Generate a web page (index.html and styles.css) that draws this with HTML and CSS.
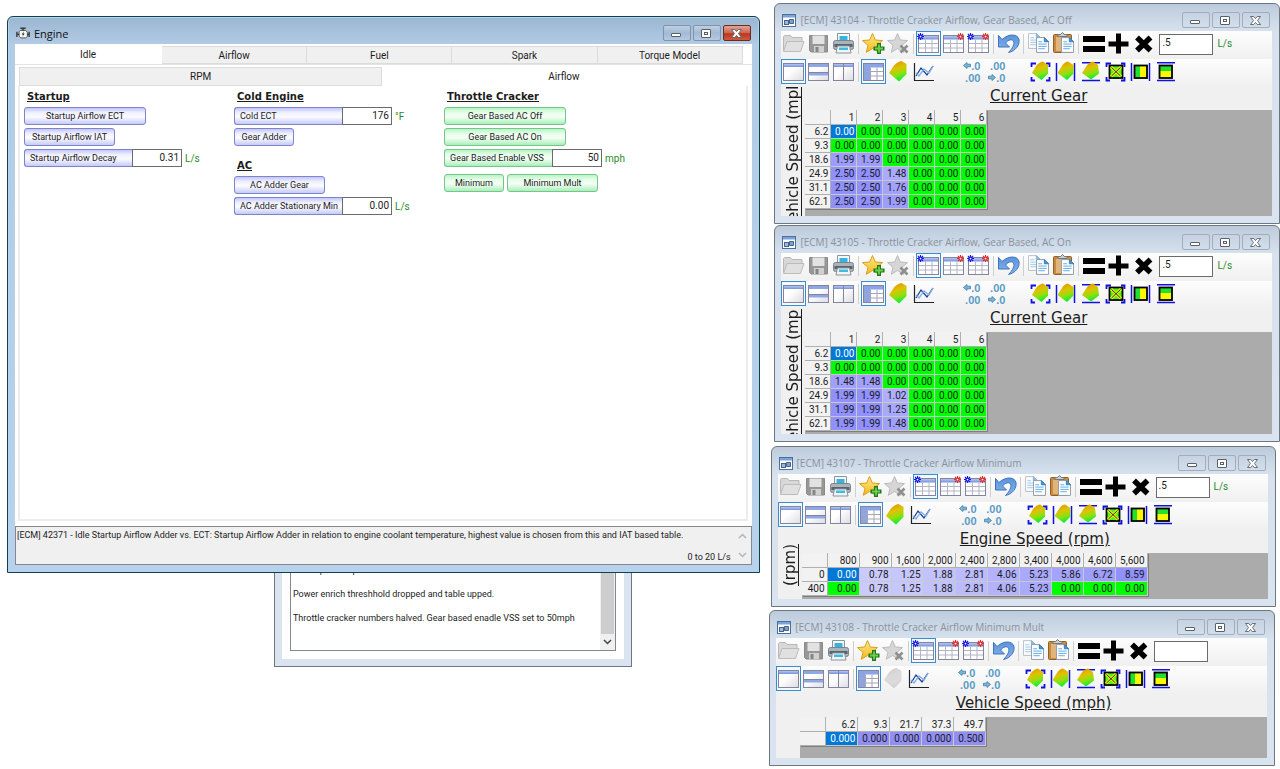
FILE: index.html
```html
<!DOCTYPE html>
<html lang="en">
<head>
    <meta charset="UTF-8">
    <meta name="viewport" content="width=device-width, initial-scale=1.0">
    <title>Engine</title>
    <link rel="stylesheet" href="styles.css">
</head>
<body>

<!-- Icon sprite -->
<svg class="sprite" aria-hidden="true">
    <defs>
        <linearGradient id="surfFill" x1="0.2" y1="0" x2="0.5" y2="1">
            <stop offset="0" stop-color="#e89000"/>
            <stop offset="0.4" stop-color="#dcc400"/>
            <stop offset="0.7" stop-color="#8ee010"/>
            <stop offset="1" stop-color="#00f030"/>
        </linearGradient>
        <linearGradient id="starFill" x1="0" y1="0" x2="0" y2="1">
            <stop offset="0" stop-color="#ffe88a"/>
            <stop offset="1" stop-color="#f5b81c"/>
        </linearGradient>
        <linearGradient id="barFill" x1="0" y1="0" x2="0" y2="1">
            <stop offset="0" stop-color="#b4c6f4"/>
            <stop offset="1" stop-color="#7391dc"/>
        </linearGradient>
        <linearGradient id="paneFill" x1="0" y1="0" x2="1" y2="1">
            <stop offset="0.4" stop-color="#fff"/>
            <stop offset="1" stop-color="#dcdce4"/>
        </linearGradient>
        <linearGradient id="undoFill" x1="0" y1="0" x2="0" y2="1">
            <stop offset="0" stop-color="#5a93dc"/>
            <stop offset="1" stop-color="#86b4ea"/>
        </linearGradient>
    </defs>
    <symbol id="i-engine" viewBox="0 0 16 14">
        <path d="M5 3.5h6l2 2v5L11 12H5.5L3.5 10V5z" fill="#f4f6f8" stroke="#444"/>
        <path d="M5 1h6M8 1v2.5M1 5v6M1 8h2.5M15 5v6M13 8h2" fill="none" stroke="#333" stroke-width="1.5"/>
        <path d="M9 4.5 6.5 8h1.7l-.9 2.8L9.9 7H8.2z" fill="#222"/>
    </symbol>
    <symbol id="i-form" viewBox="0 0 14 13">
        <rect x="0.5" y="0.5" width="13" height="12" fill="#fff" stroke="#4d6f9c"/>
        <rect x="1" y="1" width="12" height="2.5" fill="#7aa4d8"/>
        <rect x="2.5" y="6.5" width="4" height="4" fill="#9cb8dc" stroke="#47648c"/>
        <path d="M7.5 5.5h4v4h-4z" fill="#7da0cf" stroke="#47648c"/>
    </symbol>
    <symbol id="i-open" viewBox="0 0 25 25">
        <path d="M2.5 19.5V5.5l1-1h6l1.5 2h10v4" fill="#d8d8d8" stroke="#b8b8b8"/>
        <path d="M2.5 20.5 6 10.5h17l-3.5 10z" fill="#e0e0e0" stroke="#bcbcbc"/>
    </symbol>
    <symbol id="i-save" viewBox="0 0 25 25">
        <path d="M3.5 4.5h18v16.5H5l-1.5-1.5z" fill="#979797" stroke="#8a8a8a"/>
        <rect x="6.5" y="4.5" width="12" height="8.5" fill="#e2e2e2"/>
        <rect x="8" y="15" width="10" height="6" fill="#d0d0d0"/>
        <rect x="9.5" y="16" width="3" height="5" fill="#858585"/>
    </symbol>
    <symbol id="i-print" viewBox="0 0 25 25">
        <path d="M6.5 2.5h12v8h-12z" fill="#f4fafc" stroke="#8c9399"/>
        <path d="M8.5 5h8v6h-8z" fill="#36b4dc"/>
        <rect x="2.5" y="9.5" width="20" height="9" rx="2" fill="#aab3bb" stroke="#7b848c"/>
        <path d="M3.5 13h18v3h-18z" fill="#59636c"/>
        <path d="M6.5 15h12l1.5 7H5z" fill="#eef6fa" stroke="#8c9399"/>
        <path d="M8 16.5h9V19H8z" fill="#44b8de"/>
    </symbol>
    <symbol id="i-staradd" viewBox="0 0 25 25">
        <path d="M11.5 2.5 14.3 9l7.2.6-5.5 4.7 1.8 7-6.3-3.8-6.2 3.8 1.7-7L1.5 9.6 8.7 9z" fill="url(#starFill)" stroke="#d9a017"/>
        <path d="M18 12v11M12.5 17.5h11" stroke="#1f7a1f" stroke-width="4" fill="none"/>
        <path d="M18 13.5v8M14 17.5h8" stroke="#6cd04a" stroke-width="1.8" fill="none"/>
    </symbol>
    <symbol id="i-stardel" viewBox="0 0 25 25">
        <path d="M11.5 2.5 14.3 9l7.2.6-5.5 4.7 1.8 7-6.3-3.8-6.2 3.8 1.7-7L1.5 9.6 8.7 9z" fill="#d6d6d6" stroke="#bcbcbc"/>
        <path d="m14.5 14.5 7 7m0-7-7 7" stroke="#8f8f8f" stroke-width="2.6" fill="none"/>
    </symbol>
    <symbol id="g-sheet" viewBox="0 0 25 25">
        <rect x="2.5" y="4.5" width="20" height="17" fill="#fff" stroke="#84849c"/>
        <rect x="3" y="5" width="19" height="3.5" fill="url(#barFill)"/>
        <path d="M3 12.5h19M3 17h19M9.5 8.5v12.5M16 8.5v12.5" stroke="#b4b4c8" fill="none"/>
    </symbol>
    <symbol id="g-gear" viewBox="0 0 8 8">
        <path d="M4 0v8M0 4h8M1 1l6 6M7 1 1 7" stroke="currentColor" stroke-width="1.3" fill="none"/>
        <circle cx="4" cy="4" r="2.2" fill="currentColor"/>
        <circle cx="4" cy="4" r="1" fill="#fff"/>
    </symbol>
    <symbol id="i-sheetleft" viewBox="0 0 25 25">
        <use href="#g-sheet"/>
        <use href="#g-gear" x="1" y="2" width="7" height="7" color="#1414e6"/>
    </symbol>
    <symbol id="i-sheetright" viewBox="0 0 25 25">
        <use href="#g-sheet"/>
        <use href="#g-gear" x="16" y="2" width="7" height="7" color="#e62828"/>
    </symbol>
    <symbol id="i-sheetboth" viewBox="0 0 25 25">
        <use href="#g-sheet"/>
        <use href="#g-gear" x="1" y="2" width="7" height="7" color="#1414e6"/>
        <use href="#g-gear" x="16" y="2" width="7" height="7" color="#e62828"/>
    </symbol>
    <symbol id="i-undo" viewBox="0 0 25 25">
        <path d="M2.5 4.5v11.5h11l-4-4c2.5-3 6.5-4.5 8-2 1.5 2.8-1 7.5-5 11.5 7-1.5 11.5-7.5 10.5-13-1.2-5.5-10-6.5-17 0z" fill="url(#undoFill)" stroke="#3f74bd" stroke-linejoin="round"/>
    </symbol>
    <symbol id="g-page" viewBox="0 0 14 17">
        <path d="M0.5 0.5h8.5l4.5 4.5v11.5h-13z" fill="#fdfdfd" stroke="#8a97a5"/>
        <path d="M9 0.5V5h4.5z" fill="#3f97dc" stroke="#2c7cc0"/>
        <path d="M2.5 5h4M2.5 7.5h9M2.5 10h9M2.5 12.5h7" stroke="#5ba8e6" fill="none"/>
    </symbol>
    <symbol id="i-copy" viewBox="0 0 25 25">
        <use href="#g-page" x="2" y="2" width="13" height="16" opacity="0.6"/>
        <use href="#g-page" x="10" y="6" width="13" height="16"/>
    </symbol>
    <symbol id="i-paste" viewBox="0 0 25 25">
        <rect x="2.5" y="3.5" width="18" height="18" rx="1" fill="#c58a45" stroke="#94601f"/>
        <rect x="5" y="6" width="13" height="14" fill="#e0b47a"/>
        <path d="M7 5.5h9v-2h-2.5l-2-2-2 2H7z" fill="#c9cdd2" stroke="#777"/>
        <use href="#g-page" x="10" y="6" width="13" height="16"/>
    </symbol>
    <symbol id="i-equal" viewBox="0 0 25 25"><path d="M2 5h22v6H2zM2 15h22v6H2z"/></symbol>
    <symbol id="i-plus" viewBox="0 0 25 25"><path d="M10 2.5h5v8h7.5v5H15v7h-5v-7H2.5v-5H10z"/></symbol>
    <symbol id="i-times" viewBox="0 0 25 25"><path d="M6 6.5 19.5 19.5M19.5 6.5 6 19.5" stroke="#000" stroke-width="5.5" fill="none"/></symbol>

    <symbol id="i-pane" viewBox="0 0 25 25">
        <rect x="2.5" y="4.5" width="20" height="17" fill="url(#paneFill)" stroke="#84849c"/>
        <rect x="3" y="5" width="19" height="3" fill="url(#barFill)"/>
    </symbol>
    <symbol id="i-rows" viewBox="0 0 25 25">
        <rect x="2.5" y="4.5" width="20" height="17" fill="url(#paneFill)" stroke="#84849c"/>
        <path d="M3 5h19v3H3zM3 14h19v2.5H3z" fill="#8ea8e6"/>
        <path d="M3 13.5h19" stroke="#84849c"/>
    </symbol>
    <symbol id="i-cols" viewBox="0 0 25 25">
        <rect x="2.5" y="4.5" width="20" height="17" fill="url(#paneFill)" stroke="#84849c"/>
        <path d="M3 5h19v3H3z" fill="url(#barFill)"/>
        <path d="M12.5 5v16" stroke="#84849c"/>
    </symbol>
    <symbol id="i-table" viewBox="0 0 25 25">
        <rect x="2.5" y="4.5" width="20" height="17" fill="#fff" stroke="#84849c"/>
        <path d="M3 5h19v3.5H3zM3 8h6v13H3z" fill="#8ba4e6"/>
        <path d="M3 12.5h19M3 17h19M9.5 8.5v12.5M16 8.5v12.5" stroke="#a5a5bb" fill="none"/>
    </symbol>
    <symbol id="i-surf" viewBox="0 0 25 25">
        <path d="M3 14 8 6.5Q11.5 2.5 15.5 2L20.5 5v10L13 22.5z" fill="url(#surfFill)"/>
    </symbol>
    <symbol id="i-chart" viewBox="0 0 25 25">
        <path d="M3.5 4v17.5H23" fill="none" stroke="#222" stroke-width="1.2"/>
        <path d="m5 17 5-8 6 7 6-9" fill="none" stroke="#1c3f94" stroke-width="1.3"/>
        <path d="m5 14 3 3 5-7 5 4 4-7" fill="none" stroke="#7fb0e6" stroke-width="1.3"/>
    </symbol>
    <symbol id="g-arrow" viewBox="0 0 8 7">
        <path d="M0.5 3.5 4 .5v1.7h3.5v2.6H4v1.7z" fill="#7db4da" stroke="#3c7eaa" stroke-width="0.8"/>
    </symbol>
    <symbol id="g-corners" viewBox="0 0 25 25">
        <path d="M3.5 8V4.5H8M18 4.5h3.5V8M21.5 18v3.5H18M7 21.5H3.5V18" fill="none" stroke="#1010e0" stroke-width="1.8"/>
    </symbol>
    <symbol id="g-sides" viewBox="0 0 25 25">
        <path d="M3.5 4v18M21.5 4v18" stroke="#1010e0" stroke-width="1.5"/>
    </symbol>
    <symbol id="g-ends" viewBox="0 0 25 25">
        <path d="M4 3.8h18M4 21.5h18" stroke="#1010e0" stroke-width="1.5"/>
    </symbol>
    <symbol id="i-surfall" viewBox="0 0 25 25"><use href="#g-corners"/><path d="M4 14 8 7Q11 3 15 2.5L20 6v8.5L13.5 21z" fill="url(#surfFill)"/></symbol>
    <symbol id="i-surfx" viewBox="0 0 25 25"><use href="#g-sides"/><path d="M4.5 14 9 7Q11 3 15 2.5L20.5 6v8.5L14 21z" fill="url(#surfFill)"/></symbol>
    <symbol id="i-surfy" viewBox="0 0 25 25"><use href="#g-ends"/><path d="M4 14 8.5 7Q11 3 15 2.5L20 6l1 8.5-8 6z" fill="url(#surfFill)"/></symbol>
    <symbol id="i-boxall" viewBox="0 0 25 25">
        <use href="#g-corners"/>
        <rect x="6.5" y="6.5" width="13" height="12.5" fill="#50f020" stroke="#000" stroke-width="1.8"/>
        <path d="m8 8 10 9.5M18 8 8 17.5" stroke="#e8f000" stroke-width="3"/>
        <path d="m8.5 8.5 9 8.5M17.5 8.5l-9 8.5" stroke="#333" stroke-width="1"/>
    </symbol>
    <symbol id="i-boxx" viewBox="0 0 25 25">
        <use href="#g-sides"/>
        <path d="M7 7h6v12H7z" fill="#20e030"/><path d="M12 7h7v12h-7z" fill="#f8f800"/>
        <rect x="6.5" y="6.5" width="12.5" height="12.5" fill="none" stroke="#000" stroke-width="1.8"/>
    </symbol>
    <symbol id="i-boxy" viewBox="0 0 25 25">
        <use href="#g-ends"/>
        <path d="M7 7h12v6H7z" fill="#20e030"/><path d="M7 12h12v7H7z" fill="#f8f800"/>
        <rect x="6.5" y="6.5" width="12.5" height="12.5" fill="none" stroke="#000" stroke-width="1.8"/>
    </symbol>

    <symbol id="i-min" viewBox="0 0 13 11"><rect x="1.5" y="5.5" width="9" height="3" rx="0.5" fill="#fff" stroke="#5a6068"/></symbol>
    <symbol id="i-max" viewBox="0 0 13 11">
        <rect x="1.5" y="1.5" width="9" height="8" rx="0.5" fill="#fff" stroke="#5a6068"/>
        <rect x="4.5" y="4.5" width="3" height="2" fill="#fff" stroke="#5a6068"/>
    </symbol>
    <symbol id="i-close" viewBox="0 0 13 11">
        <path d="M1.5 1.5h3.2l1.8 2 1.8-2h3.2L8.5 5.5l3 4H8.3l-1.8-2-1.8 2H1.5l3-4z" fill="#fff" stroke="#5a6068" stroke-width="0.9"/>
    </symbol>
    <symbol id="i-up" viewBox="0 0 9 6"><path d="m1 5 3.5-3.5L8 5" fill="none" stroke="currentColor" stroke-width="1.5"/></symbol>
    <symbol id="i-down" viewBox="0 0 9 6"><path d="m1 1 3.5 3.5L8 1" fill="none" stroke="currentColor" stroke-width="1.5"/></symbol>
</svg>

<main class="desktop">

    <!-- Notes window, mostly behind the engine window -->
    <section class="window notes">
        <div class="notes-body">
            <textarea class="notes-text" aria-label="Notes" readonly>Base spark maps as well.

Power enrich threshhold dropped and table upped.

Throttle cracker numbers halved. Gear based enadle VSS set to 50mph</textarea>
            <div class="scrollbar">
                <div class="thumb"></div>
                <svg class="arrow"><use href="#i-down"/></svg>
            </div>
        </div>
    </section>

    <!-- Engine window -->
    <section class="window engine">
        <header class="titlebar">
            <svg class="title-icon"><use href="#i-engine"/></svg>
            <h1 class="title">Engine</h1>
            <div class="caption">
                <button type="button" aria-label="Minimize"><svg><use href="#i-min"/></svg></button>
                <button type="button" aria-label="Maximize"><svg><use href="#i-max"/></svg></button>
                <button type="button" class="close" aria-label="Close"><svg><use href="#i-close"/></svg></button>
            </div>
        </header>
        <div class="engine-body">
            <nav class="tabs outer">
                <button type="button" class="tab active">Idle</button>
                <button type="button" class="tab">Airflow</button>
                <button type="button" class="tab">Fuel</button>
                <button type="button" class="tab">Spark</button>
                <button type="button" class="tab">Torque Model</button>
            </nav>
            <div class="outer-panel">
                <nav class="tabs inner">
                    <button type="button" class="tab">RPM</button>
                    <button type="button" class="tab active">Airflow</button>
                </nav>
                <div class="panel">
                    <div class="group">
                        <h2>Startup</h2>
                        <button type="button" class="param large">Startup Airflow ECT</button>
                        <button type="button" class="param medium">Startup Airflow IAT</button>
                        <div class="field">
                            <button type="button" class="param">Startup Airflow Decay</button>
                            <input type="text" aria-label="Startup Airflow Decay" value="0.31">
                            <span class="unit">L/s</span>
                        </div>
                    </div>
                    <div class="group">
                        <h2>Cold Engine</h2>
                        <div class="field">
                            <button type="button" class="param">Cold ECT</button>
                            <input type="text" aria-label="Cold ECT" value="176">
                            <span class="unit">°F</span>
                        </div>
                        <button type="button" class="param small">Gear Adder</button>
                        <h2 class="second">AC</h2>
                        <button type="button" class="param medium">AC Adder Gear</button>
                        <div class="field">
                            <button type="button" class="param">AC Adder Stationary Min</button>
                            <input type="text" aria-label="AC Adder Stationary Min" value="0.00">
                            <span class="unit">L/s</span>
                        </div>
                    </div>
                    <div class="group green">
                        <h2>Throttle Cracker</h2>
                        <button type="button" class="param large">Gear Based AC Off</button>
                        <button type="button" class="param large">Gear Based AC On</button>
                        <div class="field">
                            <button type="button" class="param">Gear Based Enable VSS</button>
                            <input type="text" aria-label="Gear Based Enable VSS" value="50">
                            <span class="unit">mph</span>
                        </div>
                        <div class="pair">
                            <button type="button" class="param small">Minimum</button>
                            <button type="button" class="param medium">Minimum Mult</button>
                        </div>
                    </div>
                </div>
            </div>
            <footer class="status">
                <div class="status-text">
                    <p>[ECM] 42371 - Idle Startup Airflow Adder vs. ECT: Startup Airflow Adder in relation to engine coolant temperature, highest value is chosen from this and IAT based table.</p>
                    <p class="range">0 to 20 L/s</p>
                </div>
                <div class="status-scroll">
                    <svg class="arrow"><use href="#i-up"/></svg>
                    <svg class="arrow"><use href="#i-down"/></svg>
                </div>
            </footer>
        </div>
    </section>
</main>

<!-- One table editor window -->
<template id="editorTemplate">
    <section class="window editor">
        <header class="titlebar">
            <svg class="title-icon"><use href="#i-form"/></svg>
            <h1 class="title"></h1>
            <div class="caption">
                <button type="button" aria-label="Minimize"><svg><use href="#i-min"/></svg></button>
                <button type="button" aria-label="Maximize"><svg><use href="#i-max"/></svg></button>
                <button type="button" aria-label="Close"><svg><use href="#i-close"/></svg></button>
            </div>
        </header>
        <div class="editor-body">
            <div class="toolbar">
                <button type="button" class="tool" aria-label="Open"><svg><use href="#i-open"/></svg></button>
                <button type="button" class="tool" aria-label="Save"><svg><use href="#i-save"/></svg></button>
                <button type="button" class="tool" aria-label="Print"><svg><use href="#i-print"/></svg></button>
                <span class="sep"></span>
                <button type="button" class="tool" aria-label="Add favorite"><svg><use href="#i-staradd"/></svg></button>
                <button type="button" class="tool" aria-label="Remove favorite"><svg><use href="#i-stardel"/></svg></button>
                <span class="sep"></span>
                <button type="button" class="tool on" aria-label="Current"><svg><use href="#i-sheetleft"/></svg></button>
                <button type="button" class="tool" aria-label="Compare"><svg><use href="#i-sheetright"/></svg></button>
                <button type="button" class="tool" aria-label="Difference"><svg><use href="#i-sheetboth"/></svg></button>
                <span class="sep"></span>
                <button type="button" class="tool" aria-label="Undo"><svg><use href="#i-undo"/></svg></button>
                <span class="sep"></span>
                <button type="button" class="tool" aria-label="Copy"><svg><use href="#i-copy"/></svg></button>
                <button type="button" class="tool" aria-label="Paste"><svg><use href="#i-paste"/></svg></button>
                <span class="sep"></span>
                <button type="button" class="tool" aria-label="Set"><svg><use href="#i-equal"/></svg></button>
                <button type="button" class="tool" aria-label="Add"><svg><use href="#i-plus"/></svg></button>
                <button type="button" class="tool" aria-label="Multiply"><svg><use href="#i-times"/></svg></button>
                <input type="text" class="amount" aria-label="Amount">
                <span class="unit"></span>
            </div>
            <div class="toolbar">
                <button type="button" class="tool on" aria-label="Single pane"><svg><use href="#i-pane"/></svg></button>
                <button type="button" class="tool" aria-label="Split rows"><svg><use href="#i-rows"/></svg></button>
                <button type="button" class="tool" aria-label="Split columns"><svg><use href="#i-cols"/></svg></button>
                <span class="sep"></span>
                <button type="button" class="tool on" aria-label="Table view"><svg><use href="#i-table"/></svg></button>
                <button type="button" class="tool surface" aria-label="Surface view"><svg><use href="#i-surf"/></svg></button>
                <button type="button" class="tool" aria-label="Chart view"><svg><use href="#i-chart"/></svg></button>
                <span class="space"></span>
                <button type="button" class="tool decimals" aria-label="More decimals">
                    <span><svg><use href="#g-arrow"/></svg>.0</span><span>.00</span>
                </button>
                <button type="button" class="tool decimals" aria-label="Fewer decimals">
                    <span>.00</span><span><svg class="flip"><use href="#g-arrow"/></svg>.0</span>
                </button>
                <span class="space"></span>
                <button type="button" class="tool" aria-label="Smooth"><svg><use href="#i-surfall"/></svg></button>
                <button type="button" class="tool" aria-label="Smooth horizontally"><svg><use href="#i-surfx"/></svg></button>
                <button type="button" class="tool" aria-label="Smooth vertically"><svg><use href="#i-surfy"/></svg></button>
                <button type="button" class="tool" aria-label="Interpolate"><svg><use href="#i-boxall"/></svg></button>
                <button type="button" class="tool" aria-label="Interpolate horizontally"><svg><use href="#i-boxx"/></svg></button>
                <button type="button" class="tool" aria-label="Interpolate vertically"><svg><use href="#i-boxy"/></svg></button>
            </div>
            <div class="sheet">
                <div class="axis-y"><span></span></div>
                <div class="sheet-main">
                    <div class="axis-x"></div>
                    <div class="grid-area"><table class="grid"></table></div>
                </div>
            </div>
        </div>
    </section>
</template>

<script>
    const editors = [
        {
            id: "off", title: "[ECM] 43104 - Throttle Cracker Airflow, Gear Based, AC Off",
            amount: ".5", unit: "L/s", x: "Current Gear", y: "Vehicle Speed (mph)",
            cols: ["1", "2", "3", "4", "5", "6"],
            rows: [
                ["6.2", "0.00", "0.00", "0.00", "0.00", "0.00", "0.00"],
                ["9.3", "0.00", "0.00", "0.00", "0.00", "0.00", "0.00"],
                ["18.6", "1.99", "1.99", "0.00", "0.00", "0.00", "0.00"],
                ["24.9", "2.50", "2.50", "1.48", "0.00", "0.00", "0.00"],
                ["31.1", "2.50", "2.50", "1.76", "0.00", "0.00", "0.00"],
                ["62.1", "2.50", "2.50", "1.99", "0.00", "0.00", "0.00"]
            ]
        },
        {
            id: "on-ac", title: "[ECM] 43105 - Throttle Cracker Airflow, Gear Based, AC On",
            amount: ".5", unit: "L/s", x: "Current Gear", y: "Vehicle Speed (mph)",
            cols: ["1", "2", "3", "4", "5", "6"],
            rows: [
                ["6.2", "0.00", "0.00", "0.00", "0.00", "0.00", "0.00"],
                ["9.3", "0.00", "0.00", "0.00", "0.00", "0.00", "0.00"],
                ["18.6", "1.48", "1.48", "0.00", "0.00", "0.00", "0.00"],
                ["24.9", "1.99", "1.99", "1.02", "0.00", "0.00", "0.00"],
                ["31.1", "1.99", "1.99", "1.25", "0.00", "0.00", "0.00"],
                ["62.1", "1.99", "1.99", "1.48", "0.00", "0.00", "0.00"]
            ]
        },
        {
            id: "minimum", title: "[ECM] 43107 - Throttle Cracker Airflow Minimum",
            amount: ".5", unit: "L/s", x: "Engine Speed (rpm)", y: "(rpm)",
            cols: ["800", "900", "1,600", "2,000", "2,400", "2,800", "3,400", "4,000", "4,600", "5,600"],
            rows: [
                ["0", "0.00", "0.78", "1.25", "1.88", "2.81", "4.06", "5.23", "5.86", "6.72", "8.59"],
                ["400", "0.00", "0.78", "1.25", "1.88", "2.81", "4.06", "5.23", "0.00", "0.00", "0.00"]
            ]
        },
        {
            id: "mult", title: "[ECM] 43108 - Throttle Cracker Airflow Minimum Mult",
            amount: "", unit: "", x: "Vehicle Speed (mph)", y: "", flat: true,
            cols: ["6.2", "9.3", "21.7", "37.3", "49.7"],
            rows: [
                ["", "0.000", "0.000", "0.000", "0.000", "0.500"]
            ]
        }
    ];

    // Zero is green, everything else gets a darker blue as it nears the table maximum
    function cellColor(value, max, flat) {
        if (flat) return "#918ff6";
        if (value === 0) return "#00ff00";
        const c = Math.round(208 - 64 * value / max);
        return `rgb(${c}, ${c}, 255)`;
    }

    function buildGrid(editor) {
        const max = Math.max(...editor.rows.flatMap(row => row.slice(1)).map(Number));
        const head = `<tr><th></th>${editor.cols.map(c => `<th scope="col">${c}</th>`).join("")}</tr>`;
        const body = editor.rows.map(([name, ...values], r) =>
            `<tr><th scope="row">${name}</th>${values.map((v, c) =>
                r === 0 && c === 0
                    ? `<td class="selected">${v}</td>`
                    : `<td style="background-color: ${cellColor(Number(v), max, editor.flat)}">${v}</td>`
            ).join("")}</tr>`
        ).join("");
        return `<thead>${head}</thead><tbody>${body}</tbody>`;
    }

    const desktop = document.querySelector(".desktop");
    const template = document.getElementById("editorTemplate");

    editors.forEach(editor => {
        const node = template.content.cloneNode(true);
        node.querySelector(".editor").classList.add(editor.id);
        node.querySelector(".title").textContent = editor.title;
        node.querySelector(".amount").value = editor.amount;
        node.querySelector(".unit").textContent = editor.unit;
        node.querySelector(".axis-x").textContent = editor.x;
        node.querySelector(".axis-y span").textContent = editor.y;
        node.querySelector(".grid").innerHTML = buildGrid(editor);
        desktop.appendChild(node);
    });
</script>
</body>
</html>
```

FILE: styles.css
```css
* {
    box-sizing: border-box;
}
body {
    margin: 0;
    background-color: #fff;
    font-family: Roboto, "Liberation Sans", Arial, sans-serif;
    font-size: 10px;
    color: #1c1c1c;
}
h1, h2, p {
    margin: 0;
}
button, input, textarea {
    font: inherit;
    color: inherit;
    margin: 0;
    padding: 0;
}
.sprite {
    position: absolute;
    width: 0;
    height: 0;
}
.desktop {
    position: relative;
    min-height: 100vh;
    overflow: hidden;
}

/* Windows */
.window {
    position: absolute;
    border: 1px solid #6d7681;
    border-radius: 6px 6px 0 0;
    background-color: #d9e4f0;
    padding: 0 7px 7px;
}
.engine {
    left: 7px;
    top: 16px;
    width: 58.8%;
    border-color: #1d3a4c;
    background: linear-gradient(#9bb6d2, #b3cbe5 28px, #b9d1ea);
    box-shadow: inset 0 0 0 1px #a5dcee;
}
.notes {
    left: 274px;
    top: 530px;
    width: 28%;
    border-radius: 0;
}
.editor {
    width: 39.5%;
    padding: 0 7px 7px 6px;
    background: linear-gradient(#bccbdc, #d7e2ee 28px, #d9e4f0);
}
.off { left: 60.5%; top: 3px; }
.on-ac { left: 60.5%; top: 225px; }
.minimum { left: 60.2%; top: 446px; }
.mult { left: 60.1%; top: 610px; }

.titlebar {
    display: flex;
    align-items: center;
    height: 27px;
    padding: 5px 1px 0;
}
.title-icon {
    width: 14px;
    height: 13px;
    margin-right: 4px;
}
.title {
    flex: 1;
    font-family: "Open Sans", sans-serif;
    font-size: 10px;
    font-weight: normal;
    color: #8b929b;
}
.engine .title {
    font-size: 11px;
    color: #111;
}
.caption {
    display: flex;
    gap: 2px;
}
.caption button {
    display: flex;
    align-items: center;
    justify-content: center;
    width: 28px;
    height: 16px;
    border: 1px solid #a3adb9;
    border-radius: 2px;
    background-color: transparent;
}
.editor .caption {
    margin-right: 1px;
}
.caption svg {
    width: 13px;
    height: 11px;
}
.engine .caption button {
    border-color: #7f93ab;
    background: linear-gradient(#bdd0e4, #a3bad3 50%, #b4cae2);
}
.engine .caption .close {
    border-color: #6d2a20;
    background: linear-gradient(#e0a595, #cc6350 50%, #b8361d 55%, #cf5a3c);
}

/* Engine window content */
.engine-body {
    background-color: #fff;
}
.tabs {
    display: flex;
    align-items: flex-end;
}
.tab {
    flex: 1;
    height: 18px;
    border: 1px solid #dcdcdc;
    border-left: 0;
    background-color: #f0f0f0;
}
.outer {
    height: 20px;
    padding-right: 9px;
}
.tab.active {
    height: 20px;
    background-color: #fff;
    border-color: #fff;
}
.outer .active {
    padding: 0 1px;
}
.outer-panel {
    border-top: 1px solid #e3e3e3;
    padding: 2px 4px 5px 3px;
}
.inner {
    padding: 0 2px 0 1px;
}
.inner .tab {
    height: 19px;
    border-left: 1px solid #dcdcdc;
}
.inner .tab.active {
    border-color: #fff;
}
.panel {
    display: grid;
    grid-template-columns: 210px 210px 1fr;
    min-height: 435px;
    padding: 4px;
    border: 2px solid #ececec;
    border-top: 0;
}
.group {
    display: flex;
    flex-direction: column;
    align-items: flex-start;
    gap: 3px;
}
h2 {
    height: 14px;
    padding-left: 3px;
    font-family: "DejaVu Sans", Verdana, sans-serif;
    font-size: 10px;
    line-height: 14px;
    text-decoration: underline;
}
.second {
    margin-top: 10px;
}
.param {
    height: 18px;
    border: 1px solid #7c84cc;
    border-radius: 3px;
    background: linear-gradient(#c3c6fb, #f0f1ff 30%, #fbfbff 55%, #c7caf9);
    white-space: nowrap;
    overflow: hidden;
}
.param, .status, .notes {
    font-size: 9px;
}
.green .param {
    border-color: #76c68c;
    background: linear-gradient(#b4f6c2, #e9fdec 30%, #f4fff6 55%, #a9efb8);
}
.large { width: 122px; }
.medium { width: 91px; }
.small { width: 60px; }
.field {
    display: flex;
    align-items: center;
}
.field .param {
    width: 108px;
    padding-left: 5px;
    border-right: 0;
    border-radius: 3px 0 0 3px;
    text-align: left;
}
.field input {
    width: 50px;
    height: 18px;
    border: 1px solid #6b6b6b;
    padding: 0 2px 2px;
    background-color: #fff;
    text-align: right;
}
.unit {
    margin-left: 3px;
    color: #2a8a2a;
}
.pair {
    display: flex;
    gap: 3px;
    margin-top: 4px;
}
.status {
    display: flex;
    height: 39px;
    border: 1px solid #828790;
    background-color: #f0f0f0;
}
.status-text {
    flex: 1;
    display: flex;
    flex-direction: column;
    justify-content: space-between;
    min-width: 0;
    padding: 3px 4px 2px 1px;
    white-space: nowrap;
}
.range {
    text-align: right;
}
.status-scroll {
    display: flex;
    flex-direction: column;
    align-items: center;
    justify-content: space-between;
    width: 16px;
    padding: 6px 0;
    color: #b5b5b5;
}
.arrow {
    width: 9px;
    height: 6px;
}

/* Notes window content */
.notes-body {
    display: flex;
    padding: 30px 8px 8px;
    background-color: #fff;
}
.notes-text {
    flex: 1;
    height: 90px;
    border: 1px solid #828790;
    border-right: 0;
    padding: 2px;
    line-height: 12px;
    background-color: #fff;
    resize: none;
    overflow: hidden;
}
.scrollbar {
    display: flex;
    flex-direction: column;
    align-items: center;
    width: 16px;
    border: 1px solid #828790;
    border-left: 0;
    background-color: #f0f0f0;
    padding-bottom: 5px;
    gap: 5px;
    color: #444;
}
.thumb {
    flex: 1;
    width: 13px;
    background-color: #cdcdcd;
}

/* Table editors */
.editor-body {
    background-color: #f0f0f0;
}
.toolbar {
    display: flex;
    align-items: flex-start;
    height: 28px;
    background: linear-gradient(#fdfdfd, #f0f0f0);
}
.tool {
    flex: none;
    width: 25px;
    height: 25px;
    border: 0;
    background-color: transparent;
}
.tool svg {
    display: block;
    width: 25px;
    height: 25px;
}
.tool.on {
    border: 1px solid #3a8cd0;
    background-color: #f4f9fe;
}
.tool.on svg {
    margin: -1px;
}
.sep {
    flex: none;
    width: 1px;
    height: 20px;
    margin: 3px 2px 0;
    background-color: #cfcfcf;
}
.space {
    width: 21px;
}
.decimals {
    display: flex;
    flex-direction: column;
    align-items: flex-end;
    justify-content: center;
    padding-right: 2px;
    font-family: "Liberation Sans", Arial, sans-serif;
    font-size: 11px;
    font-weight: bold;
    line-height: 12px;
    color: #5a9cc4;
}
.decimals span {
    display: flex;
    align-items: center;
}
.decimals svg {
    width: 8px;
    height: 7px;
}
.flip {
    transform: rotate(180deg);
}
.mult .surface {
    filter: grayscale(1) opacity(0.5);
}
.amount {
    width: 54px;
    height: 21px;
    margin: 3px 0 0 3px;
    border: 1px solid #6b6b6b;
    padding: 0 2px 4px;
    background-color: #fff;
}
.toolbar .unit {
    margin: 7px 0 0 4px;
}
.sheet {
    display: flex;
}
.axis-y {
    flex: none;
    display: flex;
    align-items: center;
    justify-content: center;
    width: 24px;
    overflow: hidden;
}
.axis-y span {
    height: 0;
    display: flex;
    align-items: center;
    justify-content: center;
    writing-mode: vertical-rl;
    transform: rotate(180deg);
    white-space: nowrap;
}
.axis-x, .axis-y {
    font-family: "DejaVu Sans", Verdana, sans-serif;
    font-size: 15px;
    text-decoration: underline;
}
.sheet-main {
    flex: 1;
}
.axis-x {
    height: 23px;
    line-height: 19px;
    text-align: center;
}
.grid-area {
    min-height: 106px;
    background-color: #ababab;
}
.on-ac .grid-area { min-height: 102px; }
.minimum .grid-area { min-height: 46px; }
.mult .grid-area { min-height: 41px; }
.grid {
    table-layout: fixed;
    width: 182px;
    border-collapse: separate;
    border-spacing: 0;
    box-shadow: 1px 1px 0 #7d7d7d;
}
.minimum .grid { width: 346px; }
.mult .grid { width: 186px; }
.grid th:first-child { width: 26px; }
.grid th, .grid td {
    height: 14px;
    border-right: 1px solid #c9c9c9;
    border-bottom: 1px solid #c9c9c9;
    padding: 0 2px 0 0;
    font-weight: normal;
    line-height: 13px;
    text-align: right;
    white-space: nowrap;
}
.grid th {
    border-color: #b0b0b0;
    background-color: #f2f2f2;
}
.grid thead th {
    height: 15px;
}
.grid .selected {
    background-color: #0078d7;
    color: #fff;
}
```
